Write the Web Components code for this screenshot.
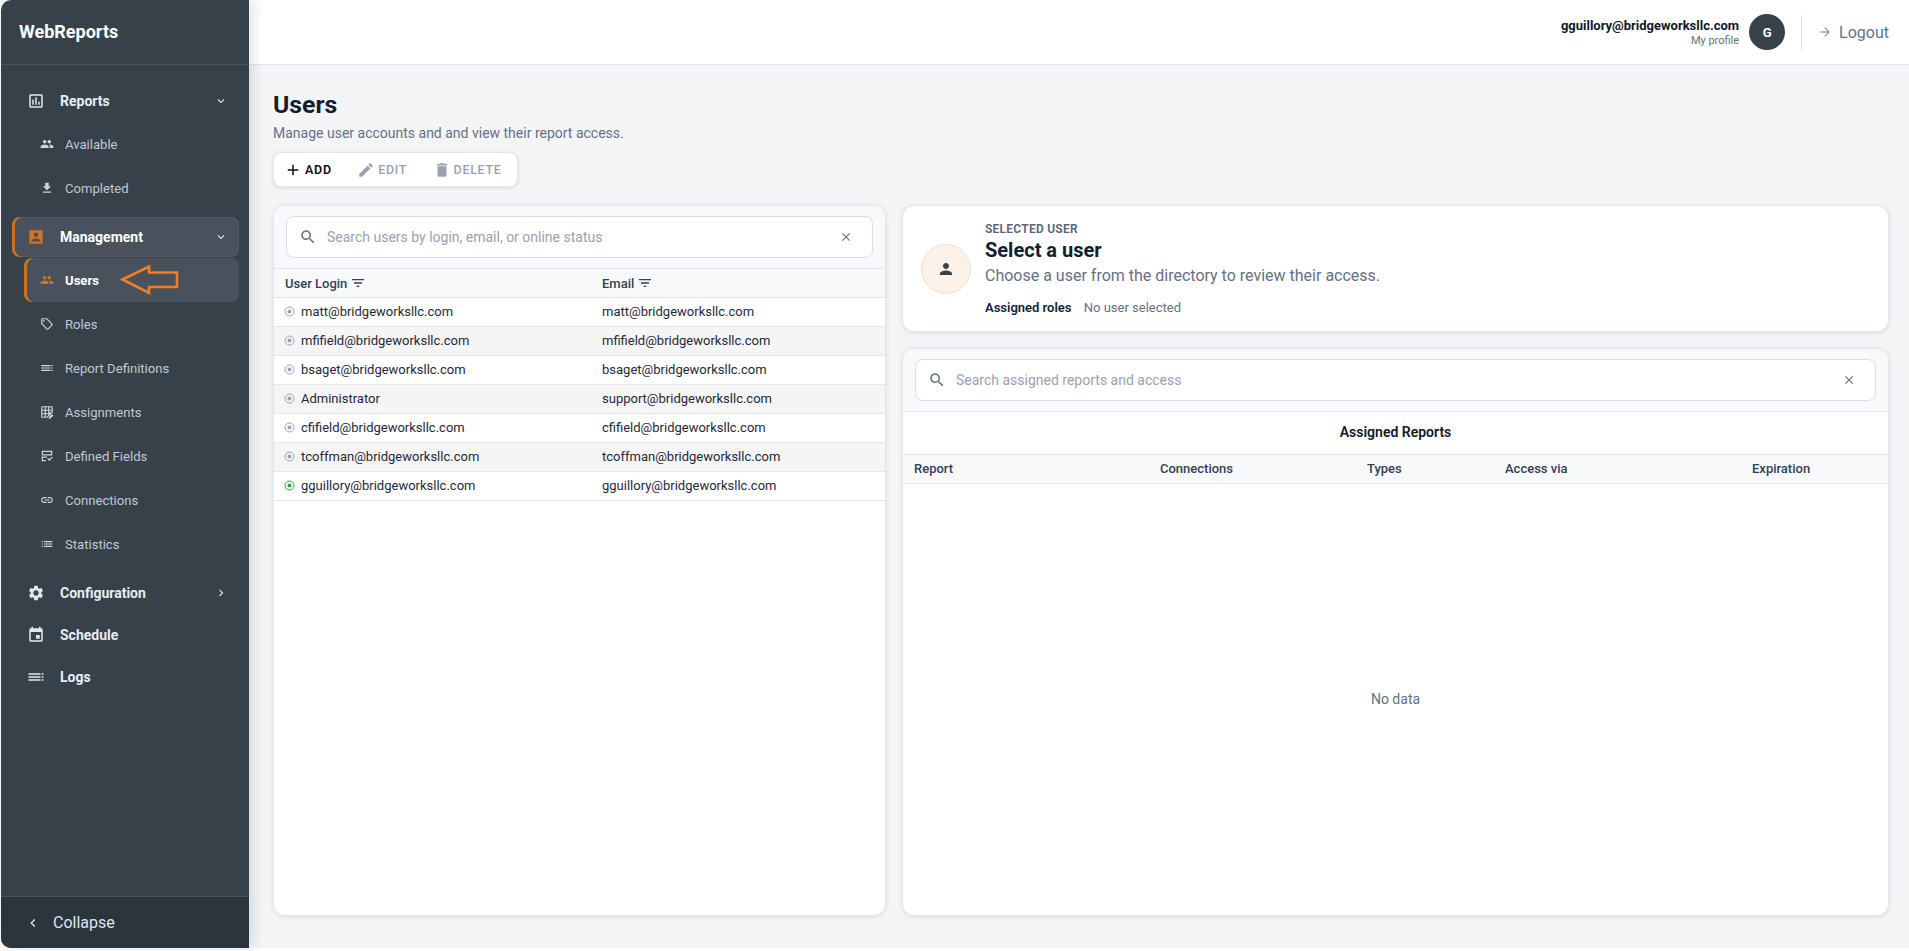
<!DOCTYPE html>
<html lang="en"><head><meta charset="utf-8"><title>WebReports</title>
<style>
html,body{margin:0;padding:0;height:100%;background:#fff;overflow:hidden}
body{font-family:Roboto,"Liberation Sans",sans-serif;color:#111827}
</style></head><body>
<app-shell>
  <side-bar slot="side"></side-bar>
  <top-bar slot="top"></top-bar>
  <users-page slot="main"></users-page>
</app-shell>
<script>
const P={
assess:'M19 3H5c-1.1 0-2 .9-2 2v14c0 1.1.9 2 2 2h14c1.1 0 2-.9 2-2V5c0-1.1-.9-2-2-2zm0 16H5V5h14v14zM7 10h2v7H7zm4-3h2v10h-2zm4 6h2v4h-2z',
people:'M16 11c1.66 0 2.99-1.34 2.99-3S17.66 5 16 5c-1.66 0-3 1.34-3 3s1.34 3 3 3zm-8 0c1.66 0 2.99-1.34 2.99-3S9.66 5 8 5C6.34 5 5 6.34 5 8s1.34 3 3 3zm0 2c-2.33 0-7 1.17-7 3.5V19h14v-2.5c0-2.33-4.67-3.5-7-3.5zm8 0c-.29 0-.62.02-.97.05 1.16.84 1.97 1.97 1.97 3.45V19h6v-2.5c0-2.33-4.67-3.5-7-3.5z',
down:'M19 9h-4V3H9v6H5l7 7 7-7zM5 18v2h14v-2H5z',
box:'M3 5v14c0 1.1.89 2 2 2h14c1.1 0 2-.9 2-2V5c0-1.1-.9-2-2-2H5c-1.11 0-2 .9-2 2zm12 4c0 1.66-1.34 3-3 3s-3-1.34-3-3 1.34-3 3-3 3 1.34 3 3zm-9 8c0-2 4-3.1 6-3.1s6 1.1 6 3.1v1H6v-1z',
tag:'M21.41 11.41l-8.83-8.83C12.21 2.21 11.7 2 11.17 2H4c-1.1 0-2 .9-2 2v7.17c0 .53.21 1.04.59 1.41l8.83 8.83c.78.78 2.05.78 2.83 0l7.17-7.17c.78-.78.78-2.04-.01-2.83zM12.83 20L4 11.17V4h7.17L20 12.83 12.83 20zM6.5 5A1.5 1.5 0 1 0 6.5 8 1.5 1.5 0 1 0 6.5 5z',
lines:'M2 7h16v2H2zM2 11h16v2H2zM2 15h16v2H2zM19.5 7h2.5v2h-2.5zM19.5 11h2.5v2h-2.5zM19.5 15h2.5v2h-2.5z',
grid:'M4 2h16a2 2 0 0 1 2 2v8.5L12.5 22H4a2 2 0 0 1-2-2V4a2 2 0 0 1 2-2zM4 4v4h4V4zM10 4v4h4V4zM16 4v4h4V4zM4 10v4h4v-4zM10 10v4h4v-4zM16 10v2.5h4V10zM4 16v4h4v-4zM10 16v4h1.5l2.5-2.5V16zM15 23.5V21l5.5-5.5 2.5 2.5-5.5 5.5z',
form:'M3 3h18v8H3zM5 5v4h14V5zM3 13h9v2H5v4h5v2H3zM12.5 17l1.4-1.4 2.1 2.1 4.6-4.6 1.4 1.4-6 6z',
link:'M3.9 12c0-1.71 1.39-3.1 3.1-3.1h4V7H7c-2.76 0-5 2.24-5 5s2.24 5 5 5h4v-1.9H7c-1.71 0-3.1-1.39-3.1-3.1zM8 13h8v-2H8v2zm9-6h-4v1.9h4c1.71 0 3.1 1.39 3.1 3.1s-1.39 3.1-3.1 3.1h-4V17h4c2.76 0 5-2.24 5-5s-2.24-5-5-5z',
list:'M3 13h2v-2H3v2zm0 4h2v-2H3v2zm0-8h2V7H3v2zm4 4h14v-2H7v2zm0 4h14v-2H7v2zM7 7v2h14V7H7z',
gear:'M19.14 12.94c.04-.3.06-.61.06-.94 0-.32-.02-.64-.07-.94l2.03-1.58c.18-.14.23-.41.12-.61l-1.92-3.32c-.12-.22-.37-.29-.59-.22l-2.39.96c-.5-.38-1.03-.7-1.62-.94l-.36-2.54c-.04-.24-.24-.41-.48-.41h-3.84c-.24 0-.43.17-.47.41l-.36 2.54c-.59.24-1.13.57-1.62.94l-2.39-.96c-.22-.08-.47 0-.59.22L2.74 8.87c-.12.21-.08.47.12.61l2.03 1.58c-.05.3-.09.63-.09.94s.02.64.07.94l-2.03 1.58c-.18.14-.23.41-.12.61l1.92 3.32c.12.22.37.29.59.22l2.39-.96c.5.38 1.03.7 1.62.94l.36 2.54c.05.24.24.41.48.41h3.84c.24 0 .44-.17.47-.41l.36-2.54c.59-.24 1.13-.56 1.62-.94l2.39.96c.22.08.47 0 .59-.22l1.92-3.32c.12-.22.07-.47-.12-.61l-2.01-1.58zM12 15.6c-1.98 0-3.6-1.62-3.6-3.6s1.62-3.6 3.6-3.6 3.6 1.62 3.6 3.6-1.62 3.6-3.6 3.6z',
event:'M17 12h-5v5h5v-5zM16 1v2H8V1H6v2H5c-1.11 0-1.99.9-1.99 2L3 19c0 1.1.89 2 2 2h14c1.1 0 2-.9 2-2V5c0-1.1-.9-2-2-2h-1V1h-2zm3 18H5V8h14v11z',
search:'M15.5 14h-.79l-.28-.27C15.41 12.59 16 11.11 16 9.5 16 5.91 13.09 3 9.5 3S3 5.91 3 9.5 5.91 16 9.5 16c1.61 0 3.09-.59 4.23-1.57l.27.28v.79l5 4.99L20.49 19l-4.99-5zm-6 0C7.01 14 5 11.99 5 9.5S7.01 5 9.5 5 14 7.01 14 9.5 11.99 14 9.5 14z',
add:'M19 13h-6v6h-2v-6H5v-2h6V5h2v6h6v2z',
edit:'M3 17.25V21h3.75L17.81 9.94l-3.75-3.75L3 17.25zM20.71 7.04c.39-.39.39-1.02 0-1.41l-2.34-2.34c-.39-.39-1.02-.39-1.41 0l-1.83 1.83 3.75 3.75 1.83-1.83z',
del:'M6 19c0 1.1.9 2 2 2h8c1.1 0 2-.9 2-2V7H6v12zM19 4h-3.5l-1-1h-5l-1 1H5v2h14V4z',
person:'M12 12c2.21 0 4-1.79 4-4s-1.79-4-4-4-4 1.79-4 4 1.79 4 4 4zm0 2c-2.67 0-8 1.34-8 4v2h16v-2c0-2.66-5.33-4-8-4z',
close:'M19 6.41L17.59 5 12 10.59 6.41 5 5 6.41 10.59 12 5 17.59 6.41 19 12 13.41 17.59 19 19 17.59 13.41 12z',
filter:'M10 18h4v-2h-4v2zM3 6v2h18V6H3zm3 7h12v-2H6v2z',
cdown:'M7.41 8.59L12 13.17l4.59-4.58L18 10l-6 6-6-6z',
cright:'M8.59 16.59L13.17 12 8.59 7.41 10 6l6 6-6 6z',
cleft:'M15.41 7.41L14 6l-6 6 6 6 1.41-1.41L10.83 12z',
arrow:'M12 4l-1 1 6.3 6.3H4v1.4h13.3L11 19l1 1 8-8z'
};
const ic=(n,s,c)=>`<svg width="${s}" height="${s}" viewBox="0 0 24 24" fill="${c||'currentColor'}" style="display:block;flex:none" aria-hidden="true"><path d="${P[n]}"/></svg>`;
const mk=(tag,fn)=>customElements.define(tag,class extends HTMLElement{constructor(){super();this.attachShadow({mode:'open'})}connectedCallback(){this.shadowRoot.innerHTML=fn(this)}});

mk('app-shell',()=>`<style>
:host{display:grid;grid-template-columns:248px 1fr;grid-template-rows:65px 1fr;height:948px;margin-left:1px;position:relative}
.s{grid-row:1/3;display:flex;min-height:0;z-index:2;box-shadow:4px 0 14px rgba(30,41,59,.14);border-radius:10px 0 0 10px}
.t{grid-column:2;display:flex}
.m{grid-column:2;display:flex;background:#f4f5f7;min-height:0;min-width:0}
</style><div class="s"><slot name="side"></slot></div><div class="t"><slot name="top"></slot></div><div class="m"><slot name="main"></slot></div>`);

mk('nav-top',h=>{const a=h.hasAttribute('active'),ch=h.getAttribute('chev');return `<style>
:host{display:block;height:42px;padding:1px 10px 1px 11px;box-sizing:border-box}
.r{height:40px;display:flex;align-items:center;box-sizing:border-box;padding-left:15px;padding-right:11px;border-radius:8px;color:#e6edf5;font-size:14px;font-weight:700;${a?'background:#49525c;box-shadow:inset 3px 0 0 #c8741f,inset 0 0 0 1px #525c66;color:#fff':''}}
.i{width:18px;color:${a?'#cf7420':'#dfe6ee'};margin-right:15px;flex:none}
span{flex:1}
.c{color:#dfe6ee;flex:none}
</style><div class="r"><div class="i">${ic(h.getAttribute('icon'),18)}</div><span>${h.getAttribute('label')}</span>${ch?`<div class="c">${ic(ch,14)}</div>`:''}</div>`});

mk('nav-sub',h=>{const a=h.hasAttribute('active');return `<style>
:host{display:block;height:44px;padding-left:23px;padding-right:10px}
.r{height:44px;display:flex;align-items:center;padding-left:16px;border-radius:8px;font-size:13.1px;font-weight:${a?700:400};color:${a?'#fff':'#c0c8d1'};${a?'background:#49525c;box-shadow:inset 3px 0 0 #c8741f':''}}
.i{color:${a?'#cf7420':'#cdd5dd'};margin-right:11px;flex:none}
</style><div class="r"><div class="i">${ic(h.getAttribute('icon'),14)}</div><span>${h.getAttribute('label')}</span><slot></slot></div>`});

mk('side-bar',()=>`<style>
:host{display:flex;flex-direction:column;flex:1;background:#37414a;border-radius:10px 0 0 10px;overflow:hidden;font-family:Roboto,sans-serif}
.h{height:65px;box-sizing:border-box;border-bottom:1px solid #4a555f;display:flex;align-items:center;padding:0 0 1px 18px;color:#fff;font-size:18px;font-weight:700}
nav{flex:1;padding-top:15px}
.g{height:6px}
.f{height:52px;background:#2d353c;border-top:1px solid #4a555f;display:flex;align-items:center;padding-left:24px;color:#dfe6ee;font-size:16px;gap:12px;box-sizing:border-box;flex:none}
.ar{position:absolute;left:119px;top:264px;z-index:3}
</style>
<div class="h">WebReports</div>
<nav>
<nav-top icon="assess" label="Reports" chev="cdown"></nav-top>
<nav-sub icon="people" label="Available"></nav-sub>
<nav-sub icon="down" label="Completed"></nav-sub>
<div class="g"></div>
<nav-top active icon="box" label="Management" chev="cdown"></nav-top>
<nav-sub active icon="people" label="Users"></nav-sub>
<nav-sub icon="tag" label="Roles"></nav-sub>
<nav-sub icon="lines" label="Report Definitions"></nav-sub>
<nav-sub icon="grid" label="Assignments"></nav-sub>
<nav-sub icon="form" label="Defined Fields"></nav-sub>
<nav-sub icon="link" label="Connections"></nav-sub>
<nav-sub icon="list" label="Statistics"></nav-sub>
<div class="g"></div>
<nav-top icon="gear" label="Configuration" chev="cright"></nav-top>
<nav-top icon="event" label="Schedule"></nav-top>
<nav-top icon="lines" label="Logs"></nav-top>
</nav>
<div class="f">${ic('cleft',16)}<span>Collapse</span></div>
<svg class="ar" width="60" height="32" viewBox="0 0 60 32" aria-hidden="true"><path d="M2.5 15.5L29 2.5v6h28V23H29v6z" fill="none" stroke="#f47e20" stroke-width="2.6"/></svg>`);

mk('top-bar',()=>`<style>
:host{display:flex;flex:1;align-items:center;justify-content:flex-end;background:#fff;border-bottom:1px solid #dfe4ec;box-sizing:border-box;height:65px;padding-right:20px;font-family:Roboto,sans-serif}
.u{text-align:right;margin-right:10px}
.e{font-size:13px;font-weight:700;color:#111827;line-height:16px}
.p{font-size:11px;color:#667085;line-height:13px}
.a{width:36px;height:36px;border-radius:50%;background:#37414a;color:#fff;font-size:13px;font-weight:700;display:flex;align-items:center;justify-content:center}
.d{width:1px;height:35px;background:#dfe4ec;margin:0 16px}
.l{display:flex;align-items:center;gap:7px;font-size:16px;color:#667085}
</style><div class="u"><div class="e">gguillory@bridgeworksllc.com</div><div class="p">My profile</div></div><div class="a">G</div><div class="d"></div><div class="l">${ic('arrow',14)}<span>Logout</span></div>`);

mk('search-box',h=>`<style>
:host{display:flex;align-items:center;height:42px;box-sizing:border-box;background:#fff;border:1px solid #d9dfe9;border-radius:8px;padding:0 19px 0 12px;font-size:14px;color:#98a2b3;font-family:Roboto,sans-serif}
.s{color:#667085;margin-right:10px}
span{flex:1}
.x{color:#667085}
</style><div class="s">${ic('search',18)}</div><span>${h.getAttribute('placeholder')}</span><div class="x">${ic('close',14)}</div>`);

mk('tool-btn',h=>{const d=h.hasAttribute('disabled');return `<style>
:host{display:flex;align-items:center;gap:3px;font-size:12.5px;font-weight:${d?500:600};letter-spacing:.7px;color:${d?'#98a2b3':'#111'};font-family:Roboto,sans-serif}
</style>${ic(h.getAttribute('icon'),18)}<span>${h.getAttribute('label')}</span>`});

mk('user-row',h=>{const on=h.hasAttribute('online');const c=on?'#2ea043':'#98a2b3';return `<style>
:host{display:grid;grid-template-columns:328px 1fr;height:29px;box-sizing:border-box;padding-bottom:2px;border-bottom:1px solid #e3e6eb;align-items:center;font-size:13px;color:#1f2937;font-family:Roboto,sans-serif;background:${h.hasAttribute('alt')?'#f5f5f6':'#fff'}}
.a{display:flex;align-items:center;gap:6px;padding-left:10px}
svg{display:block;flex:none}
</style><div class="a"><svg width="11" height="11" viewBox="0 0 11 11"><circle cx="5.5" cy="5.5" r="4.5" fill="none" stroke="${c}" stroke-width="1"/><circle cx="5.5" cy="5.5" r="2" fill="${c}"/></svg><span>${h.getAttribute('login')}</span></div><div>${h.getAttribute('email')}</div>`});

mk('users-page',()=>{
const rows=[['matt','matt'],['mfifield','mfifield'],['bsaget','bsaget'],['Administrator','support'],['cfifield','cfifield'],['tcoffman','tcoffman'],['gguillory','gguillory']];
return `<style>
:host{display:flex;flex-direction:column;flex:1;box-sizing:border-box;padding:23px 20px 32px 24px;min-width:0;font-family:Roboto,sans-serif}
h1{margin:0;font-size:24.8px;line-height:34px;font-weight:700;color:#111f33}
.sub{font-size:14px;line-height:20px;color:#667085;margin-top:1px}
.tb{display:flex;align-self:flex-start;align-items:center;gap:25.4px;height:35px;box-sizing:border-box;background:#fff;border:1px solid #e4e7ec;border-radius:8px;padding:0 15px 0 10px;margin-top:9px;box-shadow:0 1px 4px rgba(16,24,40,.12)}
.cols{display:grid;grid-template-columns:613px 1fr;gap:16px;flex:1;margin-top:18px;min-height:0}
.card{background:#fff;border:1px solid #e2e6ee;border-radius:12px;box-shadow:0 1px 5px rgba(16,24,40,.1);overflow:hidden;display:flex;flex-direction:column;min-height:0}
.sb{background:#f8f9fb;padding:10px 12px;border-bottom:1px solid #e2e6ee;flex:none}
.th{display:grid;height:29px;box-sizing:border-box;border-bottom:1px solid #e2e6ee;background:#f8f9fb;align-items:center;font-size:13px;font-weight:500;color:#344054}
.th.l{grid-template-columns:328px 1fr}
.th.l div{display:flex;align-items:center;gap:3px;padding-left:11px}
.th.l div+div{padding-left:0}
.right{display:flex;flex-direction:column;gap:16px;min-height:0}
.sel{height:127px;box-sizing:border-box;flex:none;flex-direction:row;padding:16px 18px 0;gap:14px;align-items:flex-start}
.av{width:50px;height:50px;box-sizing:border-box;border-radius:50%;background:#fbf3ea;border:1px solid #f1dcc6;color:#37414a;display:flex;align-items:center;justify-content:center;flex:none;margin-top:22px}
.ey{font-size:12px;font-weight:600;color:#566478;line-height:14px;letter-spacing:.25px}
.ti{font-size:20px;font-weight:700;color:#111f33;line-height:26px;margin-top:1px}
.de{font-size:16px;color:#667085;line-height:22px;margin-top:2px}
.ro{font-size:13px;line-height:18px;color:#667085;margin-top:12px}
.ro b{font-weight:600;color:#111f33;margin-right:9px}
.rep{flex:1}
.at{height:43px;padding-bottom:2px;display:flex;align-items:center;justify-content:center;font-size:14px;font-weight:600;color:#111827;box-sizing:border-box;border-bottom:1px solid #e2e6ee;flex:none}
.th.r{grid-template-columns:246px 207px 138px 247px 1fr;padding-left:11px;padding-bottom:1px;flex:none}
.nd{flex:1;display:flex;align-items:center;justify-content:center;font-size:14px;color:#667085;padding-bottom:2px}
</style>
<h1>Users</h1>
<div class="sub">Manage user accounts and and view their report access.</div>
<div class="tb"><tool-btn icon="add" label="ADD"></tool-btn><tool-btn disabled icon="edit" label="EDIT"></tool-btn><tool-btn disabled icon="del" label="DELETE"></tool-btn></div>
<div class="cols">
<section class="card">
<div class="sb"><search-box placeholder="Search users by login, email, or online status"></search-box></div>
<div class="th l"><div>User Login ${ic('filter',16)}</div><div>Email ${ic('filter',16)}</div></div>
${rows.map((r,i)=>`<user-row ${i%2?'alt':''} ${i==6?'online':''} login="${r[0]=='Administrator'?r[0]:r[0]+'@bridgeworksllc.com'}" email="${r[1]}@bridgeworksllc.com"></user-row>`).join('')}
</section>
<div class="right">
<section class="card sel"><div class="av">${ic('person',18)}</div><div><div class="ey">SELECTED USER</div><div class="ti">Select a user</div><div class="de">Choose a user from the directory to review their access.</div><div class="ro"><b>Assigned roles</b> No user selected</div></div></section>
<section class="card rep">
<div class="sb"><search-box placeholder="Search assigned reports and access"></search-box></div>
<div class="at">Assigned Reports</div>
<div class="th r"><div>Report</div><div>Connections</div><div>Types</div><div>Access via</div><div>Expiration</div></div>
<div class="nd">No data</div>
</section>
</div>
</div>`});
</script>
</body></html>
